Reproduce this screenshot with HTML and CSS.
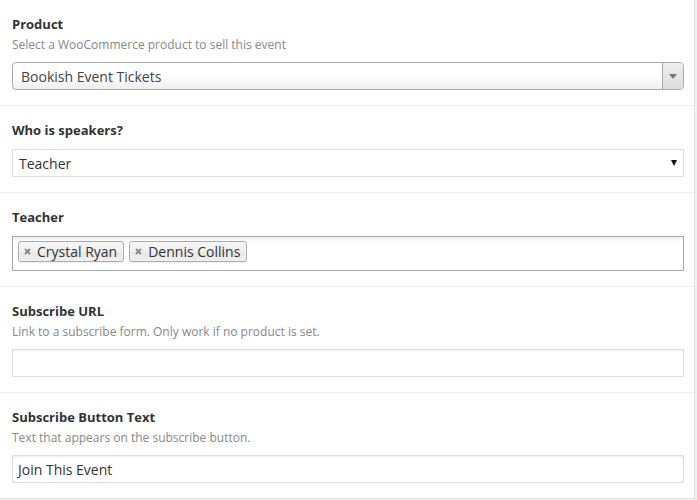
FILE: index.html
```html
<!DOCTYPE html>
<html>
<head>
<meta charset="utf-8">
<link rel="stylesheet" href="styles.css">
</head>
<body>
<div class="box">
  <div class="field">
    <div class="label">Product</div>
    <div class="desc">Select a WooCommerce product to sell this event</div>
    <div class="control s2-single">
      <span class="s2-text">Bookish Event Tickets</span>
      <span class="s2-arrow"><span class="tri-grey"></span></span>
    </div>
  </div>
  <div class="field">
    <div class="label">Who is speakers?</div>
    <div class="control native-select">
      <span class="ns-text">Teacher</span>
      <span class="tri-black"></span>
    </div>
  </div>
  <div class="field">
    <div class="label">Teacher</div>
    <div class="control s2-multi">
      <span class="tag"><svg class="x" width="7" height="7" viewBox="0 0 7 7"><path d="M1 1L6 6M6 1L1 6" stroke="#888" stroke-width="1.8" fill="none"/></svg>Crystal Ryan</span>
      <span class="tag"><svg class="x" width="7" height="7" viewBox="0 0 7 7"><path d="M1 1L6 6M6 1L1 6" stroke="#888" stroke-width="1.8" fill="none"/></svg>Dennis Collins</span>
    </div>
  </div>
  <div class="field">
    <div class="label">Subscribe URL</div>
    <div class="desc">Link to a subscribe form. Only work if no product is set.</div>
    <div class="control text-input"></div>
  </div>
  <div class="field">
    <div class="label">Subscribe Button Text</div>
    <div class="desc">Text that appears on the subscribe button.</div>
    <div class="control text-input"><span class="ti-text">Join This Event</span></div>
  </div>
</div>
</body>
</html>
```

FILE: styles.css
```css
html, body {
  margin: 0;
  padding: 0;
  background: #f1f1f1;
}
body {
  font-family: "Open Sans", "Liberation Sans", sans-serif;
  color: #444;
}
.box {
  width: 694px;
  background: #fff;
  border-right: 1px solid #e0e0e0;
  border-bottom: 1px solid #e0e0e0;
  height: 498px;
  overflow: hidden;
}
.field {
  padding: 14px 10px 15px 12px;
  border-bottom: 1px solid #eeeeee;
}
.field:last-child {
  border-bottom: none;
}
.label {
  font-size: 13px;
  font-weight: 700;
  line-height: 20px;
  padding-bottom: 1px;
  color: #333;
}
.desc {
  font-size: 12px;
  line-height: 19px;
  color: #888;
}
.control {
  margin-top: 8px;
}

.s2-single {
  box-sizing: border-box;
  height: 28px;
  border: 1px solid #aaa;
  border-radius: 4px;
  background: linear-gradient(to bottom, #ffffff 0%, #ffffff 50%, #eeeeee 100%);
  display: flex;
  align-items: center;
  justify-content: space-between;
  overflow: hidden;
}
.s2-text {
  padding-left: 8px;
  font-size: 14px;
  color: #444;
}
.s2-arrow {
  width: 20px;
  height: 100%;
  border-left: 1px solid #aaa;
  background: linear-gradient(to bottom, #eeeeee 0%, #dddddd 100%);
  display: flex;
  align-items: center;
  justify-content: center;
}
.tri-grey {
  width: 0;
  height: 0;
  border-left: 4px solid transparent;
  border-right: 4px solid transparent;
  border-top: 5px solid #777;
  margin-top: 1px;
}
.native-select {
  box-sizing: border-box;
  height: 28px;
  border: 1px solid #ddd;
  background: #fff;
  display: flex;
  align-items: center;
  justify-content: space-between;
  padding: 0 6px 0 6px;
}
.ns-text {
  font-size: 14px;
  color: #333;
}
.tri-black {
  width: 0;
  height: 0;
  border-left: 3.5px solid transparent;
  border-right: 3.5px solid transparent;
  border-top: 6px solid #111;
  margin-bottom: 1px;
}
.s2-multi {
  box-sizing: border-box;
  height: 35px;
  border: 1px solid #aaa;
  background: linear-gradient(to bottom, #eeeeee 0%, #ffffff 15%);
  display: flex;
  align-items: flex-start;
  gap: 5px;
  padding: 4px 5px 0 5px;
}
.tag {
  box-sizing: border-box;
  height: 21px;
  display: flex;
  align-items: center;
  border: 1px solid #aaa;
  border-radius: 3px;
  background: linear-gradient(to bottom, #f4f4f4 20%, #f0f0f0 50%, #e8e8e8 52%, #eeeeee 100%);
  box-shadow: 0 0 2px #fff inset, 0 1px 0 rgba(0,0,0,0.05);
  font-size: 14px;
  color: #333;
  padding: 0 6px 0 5px;
  line-height: 19px;
}
.x {
  margin-right: 6px;
  display: block;
}
.text-input {
  box-sizing: border-box;
  height: 28px;
  border: 1px solid #ddd;
  box-shadow: inset 0 1px 2px rgba(0,0,0,0.07);
  background: #fff;
  display: flex;
  align-items: center;
  padding: 0 5px;
}
.ti-text {
  font-size: 14px;
  color: #333;
}
```
